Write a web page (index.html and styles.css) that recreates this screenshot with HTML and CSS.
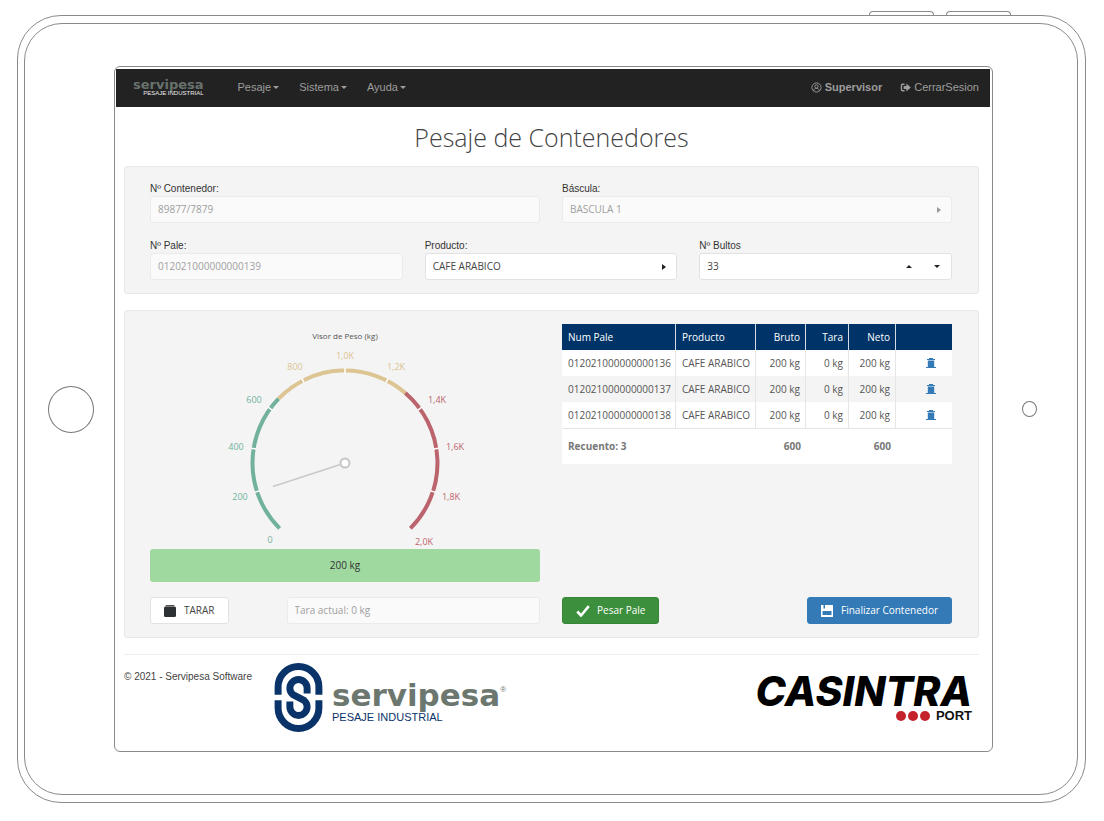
FILE: index.html
```html
<!DOCTYPE html>
<html lang="es">
<head>
<meta charset="utf-8">
<meta name="viewport" content="width=device-width, initial-scale=1">
<title>Pesaje de Contenedores</title>
<link rel="stylesheet" href="styles.css">
</head>
<body>
<div class="side-keys"><span class="side-key"></span><span class="side-key"></span></div>
<div class="tablet">
  <div class="bezel">
    <span class="home-key"></span>
    <div class="screen">
      <nav class="navbar">
        <a class="brand" href="#"><span class="brand-name">servipesa</span><span class="brand-sub">PESAJE INDUSTRIAL</span></a>
        <div class="menu">
          <a class="nav-link" href="#">Pesaje<span class="caret"></span></a>
          <a class="nav-link" href="#">Sistema<span class="caret"></span></a>
          <a class="nav-link" href="#">Ayuda<span class="caret"></span></a>
        </div>
        <div class="session">
          <a class="nav-link user" href="#"><svg class="nav-icon" viewBox="0 0 12 12" fill="none" stroke="currentColor"><circle cx="6" cy="6" r="5"/><circle cx="6" cy="4.8" r="1.8"/><path d="M2.8 9.6C3.2 7.6 4.5 7 6 7s2.8.6 3.2 2.6"/></svg>Supervisor</a>
          <a class="nav-link" href="#"><svg class="nav-icon" viewBox="0 0 12 12"><path d="M5 2.5H2.6Q1.6 2.5 1.6 3.5v5q0 1 1 1H5" fill="none" stroke="currentColor" stroke-width="1.5"/><path d="M4 4.4h3V1.600l4.800 4.400L7 10.400V7.600H4z" fill="currentColor"/></svg>CerrarSesion</a>
        </div>
      </nav>

      <main class="page">
        <h1 class="title">Pesaje de Contenedores</h1>

        <section class="panel">
          <div class="fields two">
            <div class="field">
              <label class="label" for="contenedor">Nº Contenedor:</label>
              <input class="control" id="contenedor" type="text" value="89877/7879" disabled>
            </div>
            <div class="field">
              <label class="label" for="bascula">Báscula:</label>
              <div class="select-box">
                <select class="control" id="bascula" disabled><option>BASCULA 1</option></select>
                <svg class="arrow muted" viewBox="0 0 4 6"><path d="M0 0l4 3-4 3z"/></svg>
              </div>
            </div>
          </div>
          <div class="fields three">
            <div class="field">
              <label class="label" for="pale">Nº Pale:</label>
              <input class="control" id="pale" type="text" value="012021000000000139" disabled>
            </div>
            <div class="field">
              <label class="label" for="producto">Producto:</label>
              <div class="select-box">
                <select class="control" id="producto"><option>CAFE ARABICO</option></select>
                <svg class="arrow" viewBox="0 0 4 6"><path d="M0 0l4 3-4 3z"/></svg>
              </div>
            </div>
            <div class="field">
              <label class="label" for="bultos">Nº Bultos</label>
              <div class="control spinner">
                <input class="spinner-value" id="bultos" type="text" inputmode="numeric" value="33">
                <button class="step" type="button" aria-label="Aumentar"><svg class="step-icon" viewBox="0 0 6 3"><path d="M0 3l3-3 3 3z"/></svg></button>
                <button class="step" type="button" aria-label="Reducir"><svg class="step-icon" viewBox="0 0 6 3"><path d="M0 0l3 3 3-3z"/></svg></button>
              </div>
            </div>
          </div>
        </section>

        <section class="panel weighing">
          <div class="fields two">
            <div class="scale">
              <svg class="gauge" viewBox="0 0 390 225" role="img" aria-label="Visor de Peso">
                <text class="gauge-title" x="195" y="15">Visor de Peso (kg)</text>
                <g fill="none" stroke-width="4">
                  <path stroke="#72b29d" d="M129.600 204.400A92.500 92.500 0 0 1 128.600 74.600"/>
                  <path stroke="#dcc593" d="M128.600 74.600A92.500 92.500 0 0 1 255.300 68.900"/>
                  <path stroke="#bc646d" d="M255.300 68.900A92.500 92.500 0 0 1 260.400 204.400"/>
                </g>
                <g stroke="#fff" stroke-width="1.500">
                  <path d="M195 44v5" transform="rotate(-108 195 139)"/>
                  <path d="M195 44v5" transform="rotate(-81 195 139)"/>
                  <path d="M195 44v5" transform="rotate(-54 195 139)"/>
                  <path d="M195 44v5" transform="rotate(-27 195 139)"/>
                  <path d="M195 44v5"/>
                  <path d="M195 44v5" transform="rotate(27 195 139)"/>
                  <path d="M195 44v5" transform="rotate(54 195 139)"/>
                  <path d="M195 44v5" transform="rotate(81 195 139)"/>
                  <path d="M195 44v5" transform="rotate(108 195 139)"/>
                </g>
                <path d="M195 139L123 162.500" stroke="#c9c9c9" stroke-width="1.600"/>
                <circle cx="195" cy="139" r="4.500" fill="#fff" stroke="#c6c6c6" stroke-width="2"/>
                <g class="low">
                  <text x="120" y="219">0</text><text x="90" y="176">200</text><text x="86" y="126">400</text><text x="104" y="79">600</text>
                </g>
                <g class="mid">
                  <text x="145" y="46">800</text><text x="195" y="35">1,0K</text><text x="246" y="46">1,2K</text>
                </g>
                <g class="high">
                  <text x="287" y="79">1,4K</text><text x="305" y="126">1,6K</text><text x="301" y="176">1,8K</text><text x="274" y="221">2,0K</text>
                </g>
              </svg>
              <output class="reading">200 kg</output>
            </div>
            <div class="list">
              <table class="pallets">
                <colgroup><col class="c-pale"><col class="c-prod"><col class="c-bruto"><col class="c-tara"><col class="c-neto"><col></colgroup>
                <thead><tr><th>Num Pale</th><th>Producto</th><th class="num">Bruto</th><th class="num">Tara</th><th class="num">Neto</th><th></th></tr></thead>
                <tbody>
                  <tr><td>012021000000000136</td><td>CAFE ARABICO</td><td class="num">200 kg</td><td class="num">0 kg</td><td class="num">200 kg</td><td class="act"><button class="trash" type="button" aria-label="Eliminar"><svg class="trash-icon" viewBox="0 0 10 10"><path d="M3 0h4v1h2v1H1V1h2zM1.800 2.500h6.400V9H10v1H0V9h1.800z"/></svg></button></td></tr>
                  <tr><td>012021000000000137</td><td>CAFE ARABICO</td><td class="num">200 kg</td><td class="num">0 kg</td><td class="num">200 kg</td><td class="act"><button class="trash" type="button" aria-label="Eliminar"><svg class="trash-icon" viewBox="0 0 10 10"><path d="M3 0h4v1h2v1H1V1h2zM1.800 2.500h6.400V9H10v1H0V9h1.800z"/></svg></button></td></tr>
                  <tr><td>012021000000000138</td><td>CAFE ARABICO</td><td class="num">200 kg</td><td class="num">0 kg</td><td class="num">200 kg</td><td class="act"><button class="trash" type="button" aria-label="Eliminar"><svg class="trash-icon" viewBox="0 0 10 10"><path d="M3 0h4v1h2v1H1V1h2zM1.800 2.500h6.400V9H10v1H0V9h1.800z"/></svg></button></td></tr>
                </tbody>
                <tfoot><tr><td colspan="2">Recuento: 3</td><td class="num">600</td><td></td><td class="num">600</td><td></td></tr></tfoot>
              </table>
            </div>
            <div class="actions">
              <button class="btn plain" type="button"><svg class="btn-icon" viewBox="0 0 12 12"><path d="M2 0h8l.800 1.200H1.200z" fill="#555"/><rect y="1.500" width="12" height="10.500" rx="1.500" fill="#2d3133"/></svg>TARAR</button>
              <input class="control tare" type="text" value="Tara actual: 0 kg" aria-label="Tara actual" disabled>
            </div>
            <div class="actions">
              <button class="btn green" type="button"><svg class="btn-icon wide" viewBox="0 0 14 12"><path d="M1.200 6.500l3.800 4L12.800 1.200" fill="none" stroke="#fff" stroke-width="2.600"/></svg>Pesar Pale</button>
              <button class="btn blue" type="button"><svg class="btn-icon" viewBox="0 0 12 12"><path d="M0 0h12v12H0z" fill="#fff"/><path d="M2.500 0h1.500v3.500H2.500zM1.500 6h9v4h-9z" fill="#337ab7"/></svg>Finalizar Contenedor</button>
            </div>
          </div>
        </section>

        <footer class="footer">
          <p class="copy">© 2021 - Servipesa Software</p>
          <div class="logo">
            <svg class="logo-mark" viewBox="0 0 144 208" fill="none" stroke="#0a3469" stroke-width="21">
              <path d="M10.500 96V72A61.500 61.500 0 0 1 133.500 72V96"/>
              <path d="M10.500 112V136A61.500 61.500 0 0 0 133.500 136V112"/>
              <path d="M98 92V76A26 26 0 0 0 46 76Q46 87 55 95L89 113Q98 121 98 132A26 26 0 0 1 46 132V116"/>
            </svg>
            <div class="logo-words">
              <span class="logo-name">servipesa<sup class="reg">®</sup></span>
              <span class="logo-sub">PESAJE INDUSTRIAL</span>
            </div>
          </div>
          <div class="client">
            <span class="client-name">CASINTRA</span>
            <span class="client-sub"><i class="dot"></i><i class="dot"></i><i class="dot"></i><span class="port">PORT</span></span>
          </div>
        </footer>
      </main>
    </div>
    <span class="camera"></span>
  </div>
</div>
</body>
</html>
```
FILE: styles.css
```css
* { box-sizing: border-box; }

body {
  margin: 0;
  padding: 11px 18px 18px 17px;
  background: #fff;
  color: #444;
  font: 10px/15px "Open Sans", "Noto Sans", sans-serif;
}

button, input, select { font: inherit; color: inherit; margin: 0; }
a { color: inherit; text-decoration: none; }
svg { display: block; }

/* device frame */
.side-keys { display: flex; justify-content: flex-end; gap: 12px; padding-right: 75px; }
.side-key { width: 65px; height: 4px; border: 1px solid #8a8a8a; border-bottom: 0; border-radius: 4px 4px 0 0; }
.tablet { border: 1px solid #8a8a8a; border-radius: 44px; padding: 7px 7px 7px 6px; }
.bezel {
  display: flex;
  align-items: center;
  border: 1px solid #8a8a8a;
  border-radius: 38px;
  padding: 42px 40px 42px 23px;
}
.home-key { flex: none; width: 46px; height: 47px; margin-right: 20px; border: 1px solid #777; border-radius: 50%; }
.camera { flex: none; width: 15px; height: 16px; margin-left: 29px; border: 1px solid #777; border-radius: 50%; }
.screen { flex: 1; min-width: 0; border: 1px solid #8a8a8a; border-radius: 6px; padding: 2px 2px 0 1px; }

/* navigation */
.navbar {
  display: flex;
  align-items: center;
  height: 38px;
  padding: 0 11px 2px 17px;
  background: #222;
  color: #9d9d9d;
  font: 11px/16px "Liberation Sans", Arial, sans-serif;
}
.brand { display: flex; flex-direction: column; align-items: flex-end; padding-top: 2px; }
.brand-name { font: bold 13px/10px "DejaVu Sans", sans-serif; color: #68716c; }
.brand-sub { font-size: 6px; line-height: 7px; color: #eee; }
.menu { display: flex; gap: 20px; margin-left: 34px; }
.session { display: flex; gap: 18px; margin-left: auto; }
.nav-link { display: flex; align-items: center; }
.user { font-weight: bold; }
.nav-icon { width: 11px; height: 11px; margin-right: 3px; }
.caret { margin-left: 2px; border: 3px solid transparent; border-top-color: currentColor; border-bottom: 0; }

/* page */
.page { padding: 10px 11px 19px 8px; }
.title { margin: 0 0 9px; text-align: center; font-size: 25px; line-height: 40px; font-weight: 300; color: #444; }
.panel {
  display: flex;
  flex-direction: column;
  gap: 15px;
  margin-bottom: 16px;
  padding: 14px 26px 13px 25px;
  background: #f4f4f4;
  border: 1px solid #e7e7e7;
  border-radius: 3px;
}
.weighing { padding-top: 13px; }
.fields { display: grid; column-gap: 22px; row-gap: 15px; }
.two { grid-template-columns: 1fr 1fr; }
.three { grid-template-columns: 1fr 1fr 1fr; }
.field { min-width: 0; }
.label { display: block; font: 10px/15px "Liberation Sans", Arial, sans-serif; color: #333; }
.control {
  display: block;
  width: 100%;
  height: 27px;
  padding: 0 7px 1px;
  background: #fff;
  border: 1px solid #e2e2e2;
  border-radius: 3px;
  appearance: none;
}
.control:disabled { background: #fafafa; border-color: #ebebeb; color: #a0a0a0; opacity: 1; }
.select-box { display: grid; align-items: center; }
.select-box > * { grid-area: 1 / 1; }
.arrow { width: 4px; height: 6px; margin-right: 11px; justify-self: end; pointer-events: none; fill: #222; }
.muted { fill: #999; }
.spinner { display: flex; align-items: center; padding: 0 0 0 7px; }
.spinner-value { flex: 1; min-width: 0; padding: 0; border: 0; background: none; outline: 0; }
.step { display: flex; justify-content: center; width: 28px; padding: 8px 0; border: 0; background: none; }
.step-icon { width: 6px; height: 3px; fill: #222; }

/* gauge */
.gauge { width: 100%; font-size: 9px; text-anchor: middle; }
.gauge-title { font-size: 8px; fill: #555; }
.low { fill: #72b29d; }
.mid { fill: #dcc593; }
.high { fill: #bc646d; }
.reading {
  display: block;
  height: 33px;
  background: #9fd99f;
  border-radius: 3px;
  text-align: center;
  line-height: 33px;
  color: #333;
}

/* table */
.pallets { width: 100%; table-layout: fixed; border-collapse: separate; border-spacing: 0; background: #fff; color: #555; }
.c-pale { width: 114px; }
.c-prod { width: 80px; }
.c-bruto { width: 50px; }
.c-tara { width: 43px; }
.c-neto { width: 47px; }
.pallets th, .pallets td { height: 26px; padding: 0 4px 0 6px; text-align: left; white-space: nowrap; }
.pallets th { background: #003468; color: #fff; font-weight: 400; border-right: 1px solid #d5dbe2; }
.pallets tbody td { border-right: 1px solid #e6e6e6; }
.pallets th:last-child, .pallets tbody td:last-child { border-right: 0; }
.pallets tbody tr:nth-child(even) { background: #f4f4f4; }
.pallets .num { padding-right: 5px; text-align: right; }
.pallets tfoot td { height: 36px; border-top: 1px solid #e6e6e6; font-weight: 700; color: #777; }
.trash { display: block; margin-left: auto; margin-right: 12px; padding: 0; border: 0; background: none; }
.trash-icon { width: 10px; height: 10px; fill: #337ab7; }

/* actions */
.actions { display: flex; align-items: center; justify-content: space-between; }
.btn {
  display: flex;
  align-items: center;
  height: 27px;
  padding: 0 13px;
  border: 1px solid;
  border-radius: 3px;
  color: #fff;
}
.btn-icon { width: 12px; height: 12px; margin-right: 8px; }
.wide { width: 14px; margin-right: 7px; }
.plain { background: #fff; border-color: #e2e2e2; color: #444; }
.green { background: #3c8f3c; border-color: #378637; }
.blue { background: #337ab7; border-color: #337ab7; }
.tare { width: 65%; }

/* footer */
.footer { display: flex; align-items: flex-start; padding-top: 8px; border-top: 1px solid #eee; }
.copy { margin: 6px 22px 0 0; font: 10px/15px "Liberation Sans", Arial, sans-serif; color: #444; }
.logo { display: flex; align-items: center; gap: 9px; }
.logo-mark { width: 49px; height: 69px; }
.logo-words { display: flex; flex-direction: column; padding-top: 9px; }
.logo-name { font: bold 31px/30px "DejaVu Sans", sans-serif; color: #6c776f; }
.reg { font: 8px/8px "Liberation Sans", Arial, sans-serif; vertical-align: 14px; }
.logo-sub { font: 11px/15px "Liberation Sans", Arial, sans-serif; color: #0a3469; }
.client { margin: 9px 7px 0 auto; }
.client-name { display: block; font: italic 800 41px/38px Inter, sans-serif; color: #000; }
.client-sub { display: flex; align-items: center; justify-content: flex-end; gap: 2px; }
.dot { width: 10px; height: 10px; border-radius: 50%; background: #c4232b; }
.port { margin-left: 4px; font: bold 13px/12px "Liberation Sans", Arial, sans-serif; color: #111; }
```
